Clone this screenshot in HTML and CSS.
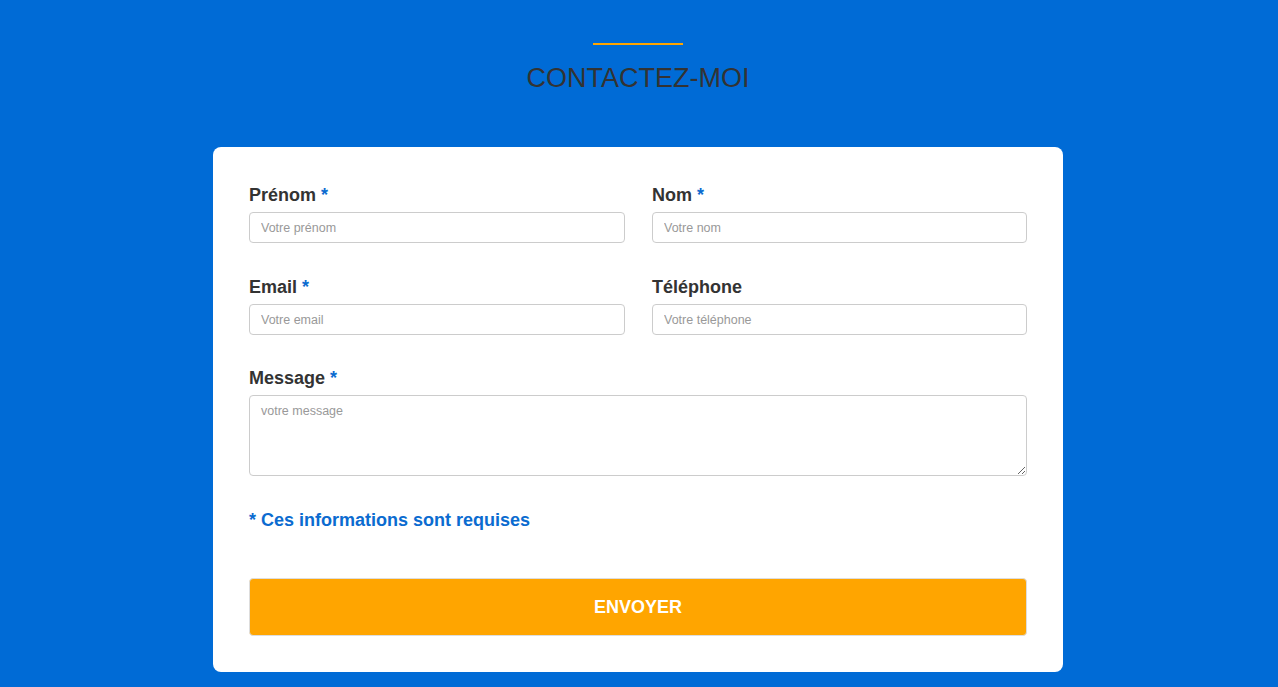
FILE: index.html
```html
<!DOCTYPE html>
<html lang="fr">
<head>
<meta charset="utf-8">
<title>Contactez-moi</title>
<link rel="stylesheet" href="styles.css">
</head>
<body>
<section class="contact">
  <div class="bar"></div>
  <h1 class="title">CONTACTEZ-MOI</h1>
  <form class="card">
    <div class="grid">
      <div class="field">
        <label class="label" for="prenom">Prénom <span class="req">*</span></label>
        <input class="input" id="prenom" type="text" placeholder="Votre prénom">
      </div>
      <div class="field">
        <label class="label" for="nom">Nom <span class="req">*</span></label>
        <input class="input" id="nom" type="text" placeholder="Votre nom">
      </div>
      <div class="field">
        <label class="label" for="email">Email <span class="req">*</span></label>
        <input class="input" id="email" type="email" placeholder="Votre email">
      </div>
      <div class="field">
        <label class="label" for="tel">Téléphone</label>
        <input class="input" id="tel" type="tel" placeholder="Votre téléphone">
      </div>
      <div class="field full">
        <label class="label" for="msg">Message <span class="req">*</span></label>
        <textarea class="input area" id="msg" placeholder="votre message"></textarea>
      </div>
    </div>
    <p class="note">* Ces informations sont requises</p>
    <button class="submit" type="button">ENVOYER</button>
  </form>
</section>
</body>
</html>
```
FILE: styles.css
```css
html, body {
  margin: 0;
  padding: 0;
}
body {
  background: #006bd6;
  font-family: "Liberation Sans", Arial, sans-serif;
  height: 687px;
  overflow: hidden;
}
.contact {
  display: flex;
  flex-direction: column;
  align-items: center;
  padding-top: 43px;
  padding-right: 2px;
}
.bar {
  width: 90px;
  height: 2px;
  background: #ffa500;
}
.title {
  margin: 17px 0 0;
  font-size: 27px;
  line-height: 32px;
  font-weight: normal;
  color: #333;
}
.card {
  margin-top: 53px;
  width: 850px;
  box-sizing: border-box;
  background: #fff;
  border-radius: 8px;
  padding: 37px 36px 36px 36px;
}
.grid {
  display: grid;
  grid-template-columns: 376px 375px;
  column-gap: 27px;
  row-gap: 33px;
}
.field {
  display: flex;
  flex-direction: column;
}
.field.full {
  grid-column: 1 / -1;
  margin-top: -1px;
}
.label {
  font-size: 18px;
  line-height: 22px;
  font-weight: bold;
  color: #333;
  margin-bottom: 6px;
}
.req {
  color: #0b6bd0;
}
.input {
  height: 31px;
  box-sizing: border-box;
  border: 1px solid #ccc;
  border-radius: 4px;
  padding: 0 11px;
  font-family: "Liberation Sans", Arial, sans-serif;
  font-size: 12.5px;
  color: #333;
  background: #fff;
  outline: none;
}
.input::placeholder {
  color: #999;
}
.area {
  height: 81px;
  padding: 8px 11px;
  resize: vertical;
}
.note {
  margin: 33px 0 0;
  font-size: 18px;
  line-height: 22px;
  font-weight: bold;
  color: #0b6bd0;
}
.submit {
  display: block;
  margin-top: 47px;
  width: 100%;
  height: 58px;
  background: #ffa500;
  border: 1px solid #ddd;
  border-radius: 4px;
  color: #fff;
  font-family: "Liberation Sans", Arial, sans-serif;
  font-size: 18px;
  font-weight: bold;
}
```
